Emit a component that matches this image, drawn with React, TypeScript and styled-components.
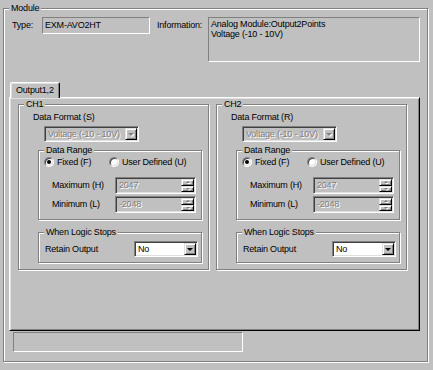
import styled, { createGlobalStyle } from 'styled-components'

const GlobalStyle = createGlobalStyle`
    body {
        margin: 0;
        background: #c0c0c0;
    }
    * {
        box-sizing: border-box;
    }
`

const Window = styled.div`
    width: 433px;
    height: 370px;
    padding: 8px 0 0 3px;
    background: #c0c0c0;
    font-family: 'Liberation Sans', Arial, sans-serif;
    font-size: 9px;
    letter-spacing: -0.2px;
    color: #000;
    overflow: hidden;
`

const Group = styled.div<{ $w: number; $h: number }>`
    position: relative;
    width: ${({ $w }) => $w}px;
    height: ${({ $h }) => $h}px;
    flex: none;
    border: 1px solid #808080;
    box-shadow: inset 1px 1px 0 #fff, 1px 1px 0 #fff;
`

const Caption = styled.span`
    position: absolute;
    top: -6px;
    left: 5px;
    padding: 0 2px;
    line-height: 11px;
    background: #c0c0c0;
    white-space: nowrap;
`

const Column = styled.div`
    display: flex;
    flex-direction: column;
    align-items: flex-start;
`

const ModuleBody = styled(Column)`
    padding-top: 8px;
`

const InfoRow = styled.div`
    display: flex;
    align-items: flex-start;
    margin-left: 8px;
`

const FieldLabel = styled.span<{ $w: number; $gap?: number }>`
    width: ${({ $w }) => $w}px;
    margin-left: ${({ $gap }) => $gap || 0}px;
    line-height: 17px;
    white-space: nowrap;
`

const StaticBox = styled.div<{ $w: number; $h: number; $lh: number }>`
    width: ${({ $w }) => $w}px;
    height: ${({ $h }) => $h}px;
    padding: ${({ $lh }) => ($lh > 12 ? '0 2px' : '1px 2px')};
    line-height: ${({ $lh }) => $lh}px;
    border: 1px solid;
    border-color: #808080 #fff #fff #808080;
    white-space: nowrap;
`

const TabArea = styled(Column)`
    margin: 20px 0 0 5px;
`

const TabStrip = styled.div`
    display: flex;
    padding-left: 1px;
    height: 16px;
`

const Tab = styled.div`
    position: relative;
    z-index: 1;
    width: 50px;
    height: 16px;
    padding-left: 5px;
    line-height: 14px;
    background: #c0c0c0;
    border: 1px solid;
    border-bottom: none;
    border-color: #fff #000 transparent #fff;
    border-radius: 2px 2px 0 0;
    box-shadow: inset -1px 0 0 #808080, inset 1px 1px 0 #dfdfdf;
`

const TabPanel = styled.div`
    display: flex;
    gap: 7px;
    width: 411px;
    height: 234px;
    margin-top: -1px;
    padding: 6px 0 0 8px;
    border: 1px solid;
    border-color: #fff #000 #000 #fff;
    box-shadow: inset 1px 1px 0 #dfdfdf, inset -1px -1px 0 #808080;
`

const ChannelBody = styled(Column)`
    padding-top: 7px;
`

const Label = styled.span<{ $indent?: number; $w?: number }>`
    margin-left: ${({ $indent }) => $indent || 0}px;
    width: ${({ $w }) => ($w ? `${$w}px` : 'auto')};
    flex: none;
    line-height: 11px;
    white-space: nowrap;
`

const Sunken = styled.div<{ $w: number; $h: number; $white?: boolean }>`
    display: flex;
    width: ${({ $w }) => $w}px;
    height: ${({ $h }) => $h}px;
    flex: none;
    border: 1px solid;
    border-color: #808080 #fff #fff #808080;
    box-shadow: inset 1px 1px 0 #404040, inset -1px -1px 0 #dfdfdf;
    background: ${({ $white }) => ($white ? '#fff' : '#c0c0c0')};
    padding: 1px;
`

const FieldText = styled.span<{ $disabled?: boolean }>`
    flex: 1 1 0;
    min-width: 0;
    padding-left: 2px;
    line-height: 12px;
    white-space: nowrap;
    overflow: hidden;
    color: ${({ $disabled }) => ($disabled ? '#808080' : '#000')};
    text-shadow: ${({ $disabled }) => ($disabled ? '1px 1px 0 #fff' : 'none')};
`

const RaisedButton = styled.div<{ $w: number; $stacked?: boolean }>`
    display: flex;
    align-items: center;
    justify-content: center;
    width: ${({ $w }) => $w}px;
    flex: ${({ $stacked }) => ($stacked ? '1 1 0' : 'none')};
    background: #c0c0c0;
    border: 1px solid;
    border-color: #dfdfdf #000 #000 #dfdfdf;
    box-shadow: inset 1px 1px 0 #fff, inset -1px -1px 0 #808080;
`

const SpinStack = styled.div`
    display: flex;
    flex-direction: column;
    width: 13px;
    flex: none;
`

const Arrow = styled.span<{ $up?: boolean; $size: number; $disabled?: boolean }>`
    width: 0;
    height: 0;
    border-left: ${({ $size }) => $size}px solid transparent;
    border-right: ${({ $size }) => $size}px solid transparent;
    ${({ $up, $size, $disabled }) =>
        `${$up ? 'border-bottom' : 'border-top'}: ${$size}px solid ${
            $disabled ? '#808080' : '#000'
        };`}
    filter: ${({ $disabled }) =>
        $disabled ? 'drop-shadow(1px 1px 0 #fff)' : 'none'};
`

const SubGroupBody = styled(Column)`
    padding-top: 5px;
`

const RadioRow = styled.div`
    display: flex;
    align-items: center;
    height: 12px;
    padding-left: 5px;
`

const RadioOption = styled.label<{ $w?: number }>`
    display: flex;
    align-items: center;
    gap: 3px;
    width: ${({ $w }) => ($w ? `${$w}px` : 'auto')};
    line-height: 11px;
    white-space: nowrap;
`

const RadioDot = styled.span<{ $on?: boolean }>`
    display: flex;
    align-items: center;
    justify-content: center;
    width: 10px;
    height: 10px;
    border-radius: 50%;
    background: #fff;
    border: 1px solid;
    border-color: #808080 #fff #fff #808080;
    box-shadow: inset 1px 1px 0 #404040, inset -1px -1px 0 #dfdfdf;

    &::after {
        content: '';
        display: ${({ $on }) => ($on ? 'block' : 'none')};
        width: 4px;
        height: 4px;
        border-radius: 50%;
        background: #000;
    }
`

const FieldRow = styled.div<{ $top: number; $indent: number }>`
    display: flex;
    align-items: center;
    margin-top: ${({ $top }) => $top}px;
    padding-left: ${({ $indent }) => $indent}px;
`

const Indent = styled.div<{ $top: number; $left: number }>`
    margin: ${({ $top, $left }) => `${$top}px 0 0 ${$left}px`};
`

const StatusBox = styled.div`
    width: 230px;
    height: 20px;
    margin: 1px 0 0 9px;
    border: 1px solid;
    border-color: #808080 #fff #fff #808080;
`

const Combo = ({
    width,
    value,
    disabled,
}: {
    width: number
    value: string
    disabled?: boolean
}) => (
    <Sunken $w={width} $h={16} $white={!disabled}>
        <FieldText $disabled={disabled}>{value}</FieldText>
        <RaisedButton $w={12}>
            <Arrow $size={3} $disabled={disabled} />
        </RaisedButton>
    </Sunken>
)

const SpinField = ({ value }: { value: string }) => (
    <Sunken $w={81} $h={17}>
        <FieldText $disabled>{value}</FieldText>
        <SpinStack>
            <RaisedButton $w={13} $stacked>
                <Arrow $up $size={2} $disabled />
            </RaisedButton>
            <RaisedButton $w={13} $stacked>
                <Arrow $size={2} $disabled />
            </RaisedButton>
        </SpinStack>
    </Sunken>
)

const Channel = ({ name, letter }: { name: string; letter: string }) => (
    <Group $w={191} $h={166}>
        <Caption>{name}</Caption>
        <ChannelBody>
            <Label $indent={14}>Data Format ({letter})</Label>
            <Indent $top={3} $left={25}>
                <Combo width={95} value="Voltage (-10 - 10V)" disabled />
            </Indent>
            <Indent $top={8} $left={19}>
                <Group $w={164} $h={70}>
                    <Caption>Data Range</Caption>
                    <SubGroupBody>
                        <RadioRow>
                            <RadioOption $w={65}>
                                <RadioDot $on />
                                Fixed (F)
                            </RadioOption>
                            <RadioOption>
                                <RadioDot />
                                User Defined (U)
                            </RadioOption>
                        </RadioRow>
                        <FieldRow $top={9} $indent={13}>
                            <Label $w={63}>Maximum (H)</Label>
                            <SpinField value="2047" />
                        </FieldRow>
                        <FieldRow $top={2} $indent={13}>
                            <Label $w={63}>Minimum (L)</Label>
                            <SpinField value="-2048" />
                        </FieldRow>
                    </SubGroupBody>
                </Group>
            </Indent>
            <Indent $top={12} $left={19}>
                <Group $w={164} $h={31}>
                    <Caption>When Logic Stops</Caption>
                    <FieldRow $top={8} $indent={6}>
                        <Label $w={89}>Retain Output</Label>
                        <Combo width={64} value="No" />
                    </FieldRow>
                </Group>
            </Indent>
        </ChannelBody>
    </Group>
)

export default function App() {
    return (
        <Window>
            <GlobalStyle />
            <Group $w={425} $h={354}>
                <Caption>Module</Caption>
                <ModuleBody>
                    <InfoRow>
                        <FieldLabel $w={30}>Type:</FieldLabel>
                        <StaticBox $w={108} $h={17} $lh={15}>
                            EXM-AVO2HT
                        </StaticBox>
                        <FieldLabel $w={51} $gap={7}>
                            Information:
                        </FieldLabel>
                        <StaticBox $w={212} $h={45} $lh={10}>
                            Analog Module:Output2Points
                            <br />
                            Voltage (-10 - 10V)
                        </StaticBox>
                    </InfoRow>
                    <TabArea>
                        <TabStrip>
                            <Tab>Output1,2</Tab>
                        </TabStrip>
                        <TabPanel>
                            <Channel name="CH1" letter="S" />
                            <Channel name="CH2" letter="R" />
                        </TabPanel>
                    </TabArea>
                    <StatusBox />
                </ModuleBody>
            </Group>
        </Window>
    )
}
